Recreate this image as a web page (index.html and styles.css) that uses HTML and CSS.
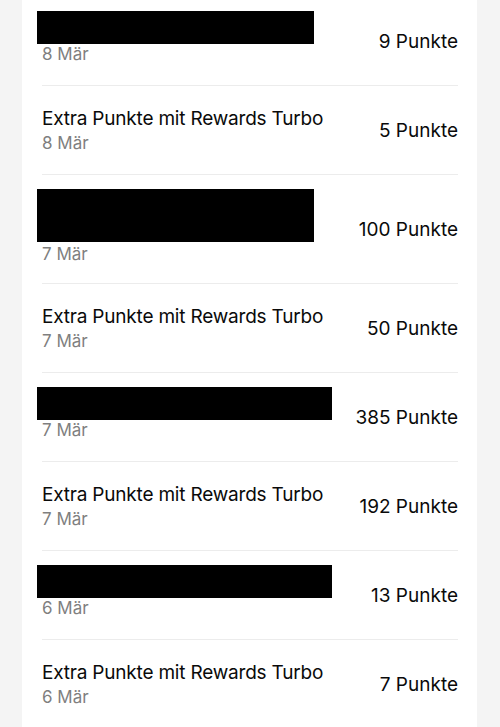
FILE: index.html
```html
<!DOCTYPE html>
<html lang="de">
<head>
<meta charset="utf-8">
<link rel="stylesheet" href="styles.css">
</head>
<body>
<div class="card">
  <div class="row">
    <div class="info"><div class="redact w1"></div><div class="date">8 Mär</div></div>
    <div class="points">9 Punkte</div>
  </div>
  <div class="row">
    <div class="info"><div class="title">Extra Punkte mit Rewards Turbo</div><div class="date">8 Mär</div></div>
    <div class="points">5 Punkte</div>
  </div>
  <div class="row tall">
    <div class="info"><div class="redact w1 big"></div><div class="date">7 Mär</div></div>
    <div class="points">100 Punkte</div>
  </div>
  <div class="row">
    <div class="info"><div class="title">Extra Punkte mit Rewards Turbo</div><div class="date">7 Mär</div></div>
    <div class="points">50 Punkte</div>
  </div>
  <div class="row">
    <div class="info"><div class="redact w2"></div><div class="date">7 Mär</div></div>
    <div class="points">385 Punkte</div>
  </div>
  <div class="row">
    <div class="info"><div class="title">Extra Punkte mit Rewards Turbo</div><div class="date">7 Mär</div></div>
    <div class="points">192 Punkte</div>
  </div>
  <div class="row">
    <div class="info"><div class="redact w2"></div><div class="date">6 Mär</div></div>
    <div class="points">13 Punkte</div>
  </div>
  <div class="row last">
    <div class="info"><div class="title">Extra Punkte mit Rewards Turbo</div><div class="date">6 Mär</div></div>
    <div class="points">7 Punkte</div>
  </div>
</div>
</body>
</html>
```

FILE: styles.css
```css
html, body {
  margin: 0;
  padding: 0;
  background: #f4f4f4;
}
body {
  font-family: Inter, "Noto Sans", "Liberation Sans", sans-serif;
  color: #0a0a0a;
  overflow: hidden;
}
.card {
  margin: -3px 23px 0 22px;
  background: #fff;
  padding: 0 19px 0 20px;
}
.row {
  height: 88px;
  box-sizing: content-box;
  border-bottom: 1px solid #ececec;
  display: flex;
  align-items: center;
  justify-content: space-between;
}
.row.tall {
  height: 108px;
}
.info {
  display: flex;
  flex-direction: column;
  align-self: flex-start;
  padding-top: 21px;
}
.title {
  font-size: 19px;
  line-height: 24px;
  letter-spacing: -0.2px;
  white-space: nowrap;
}
.date {
  font-size: 17px;
  line-height: 24px;
  color: #7f7f7f;
}
.redact {
  background: #000;
  height: 33px;
  margin: -7px 0 -2px -5px;
}
.redact.big {
  height: 53px;
  margin-bottom: 0;
}
.w1 { width: 277px; }
.w2 { width: 295px; }
.points {
  font-size: 19px;
  line-height: 24px;
  letter-spacing: 0;
  margin-top: 2px;
  white-space: nowrap;
}
```
